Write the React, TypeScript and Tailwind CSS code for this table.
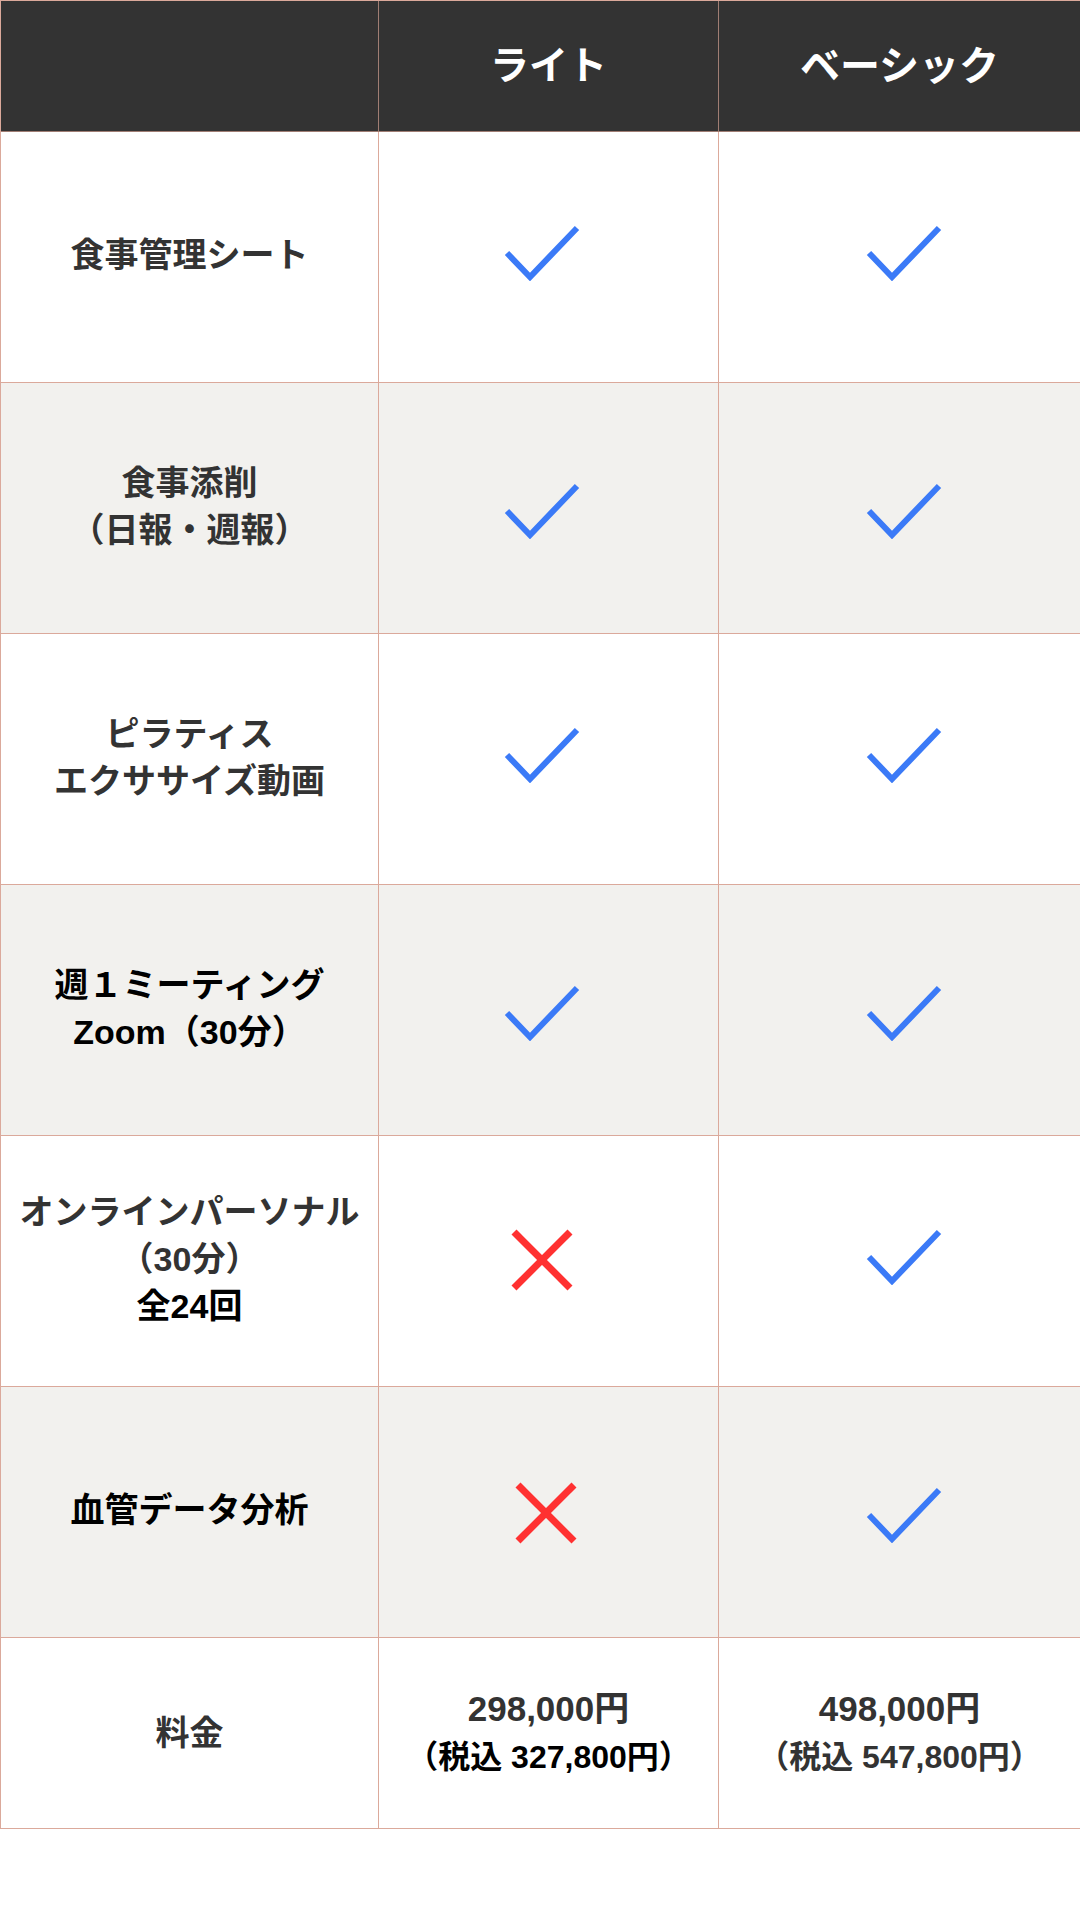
import React from "react"

type Mark = "check" | "cross"

interface Row {
  label: React.ReactNode
  lite: Mark
  basic: Mark
  shaded: boolean
  crossNudge?: string
}

const rows: Row[] = [
  { label: <span className="text-[#333]">食事管理シート</span>, lite: "check", basic: "check", shaded: false },
  {
    label: (
      <span className="text-[#333]">
        食事添削
        <br />
        <span className="-ml-[10px]">（</span>日報・週報<span className="-mr-[10px]">）</span>
      </span>
    ),
    lite: "check",
    basic: "check",
    shaded: true,
  },
  {
    label: (
      <span className="text-[#333]">
        ピラティス
        <br />
        エクササイズ動画
      </span>
    ),
    lite: "check",
    basic: "check",
    shaded: false,
  },
  {
    label: (
      <span className="text-black">
        週１ミーティング
        <br />
        Zoom（30分）
      </span>
    ),
    lite: "check",
    basic: "check",
    shaded: true,
  },
  {
    label: (
      <>
        <span className="text-[#333]">
          オンラインパーソナル
          <br />
          <span className="-ml-[18px]">（</span>30分<span className="-mr-[18px]">）</span>
        </span>
        <br />
        <span className="text-black">全24回</span>
      </>
    ),
    lite: "cross",
    basic: "check",
    shaded: false,
    crossNudge: "mr-[14px] mb-[2px]",
  },
  {
    label: <span className="text-black">血管データ分析</span>,
    lite: "cross",
    basic: "check",
    shaded: true,
    crossNudge: "mr-[6px] mt-[2px]",
  },
]

function CheckIcon() {
  return (
    <svg width="76" height="58" viewBox="0 0 76 58" fill="none">
      <polyline points="3,30 26,54 73,5" stroke="#3b7af7" strokeWidth="6" />
    </svg>
  )
}

function CrossIcon() {
  return (
    <svg width="64" height="64" viewBox="0 0 64 64" fill="none">
      <line x1="4" y1="4" x2="60" y2="60" stroke="#ff3131" strokeWidth="7" />
      <line x1="60" y1="4" x2="4" y2="60" stroke="#ff3131" strokeWidth="7" />
    </svg>
  )
}

function MarkCell({
  mark,
  shaded,
  col,
  crossNudge,
}: {
  mark: Mark
  shaded: boolean
  col: "lite" | "basic"
  crossNudge?: string
}) {
  const bg = shaded ? "bg-[#f2f1ee]" : "bg-white"
  const shift = shaded ? "mt-[3px]" : "mb-[10px]"
  const nudge = col === "lite" ? "mr-[14px]" : "ml-[9px]"
  return (
    <div className={`${bg} h-[251px] flex items-center justify-center border-r border-b border-[#dba99b]`}>
      {mark === "check" ? (
        <div className={`${shift} ${nudge}`}>
          <CheckIcon />
        </div>
      ) : (
        <div className={crossNudge}>
          <CrossIcon />
        </div>
      )}
    </div>
  )
}

export default function App() {
  return (
    <div className="w-[1080px] h-[1920px] bg-white font-['Liberation_Sans','Noto_Sans_CJK_JP',sans-serif]">
      <div className="grid grid-cols-[378px_340px_362px] border-t border-l border-[#dba99b] font-bold">
        {/* header */}
        <div className="h-[131px] bg-[#333] border-r border-b border-[#a07e74]" />
        <div className="h-[131px] bg-[#333] border-r border-b border-[#a07e74] flex items-center justify-center text-white text-[39px]">
          ライト
        </div>
        <div className="h-[131px] bg-[#333] border-r border-b border-[#a07e74] flex items-center justify-center text-white text-[40px]">
          ベーシック
        </div>

        {rows.map((row, i) => (
          <React.Fragment key={i}>
            <div
              className={`${row.shaded ? "bg-[#f2f1ee]" : "bg-white"} h-[251px] flex items-center justify-center text-center text-[34px] leading-[47px] border-r border-b border-[#dba99b]`}
            >
              <div className="mb-[3px] whitespace-nowrap">{row.label}</div>
            </div>
            <MarkCell mark={row.lite} shaded={row.shaded} col="lite" crossNudge={row.crossNudge} />
            <MarkCell mark={row.basic} shaded={row.shaded} col="basic" />
          </React.Fragment>
        ))}

        {/* price */}
        <div className="h-[191px] bg-white flex items-center justify-center text-[34px] text-[#333] border-r border-b border-[#dba99b]">
          料金
        </div>
        <div className="h-[191px] bg-white flex flex-col items-center justify-center text-center border-r border-b border-[#dba99b]">
          <div className="text-[35px] leading-[48px] text-[#333]">298,000円</div>
          <div className="text-[32px] leading-[48px] text-black">（税込 327,800円）</div>
        </div>
        <div className="h-[191px] bg-white flex flex-col items-center justify-center text-center border-r border-b border-[#dba99b]">
          <div className="text-[35px] leading-[48px] text-[#333]">498,000円</div>
          <div className="text-[32px] leading-[48px] text-[#333]">（税込 547,800円）</div>
        </div>
      </div>
    </div>
  )
}
